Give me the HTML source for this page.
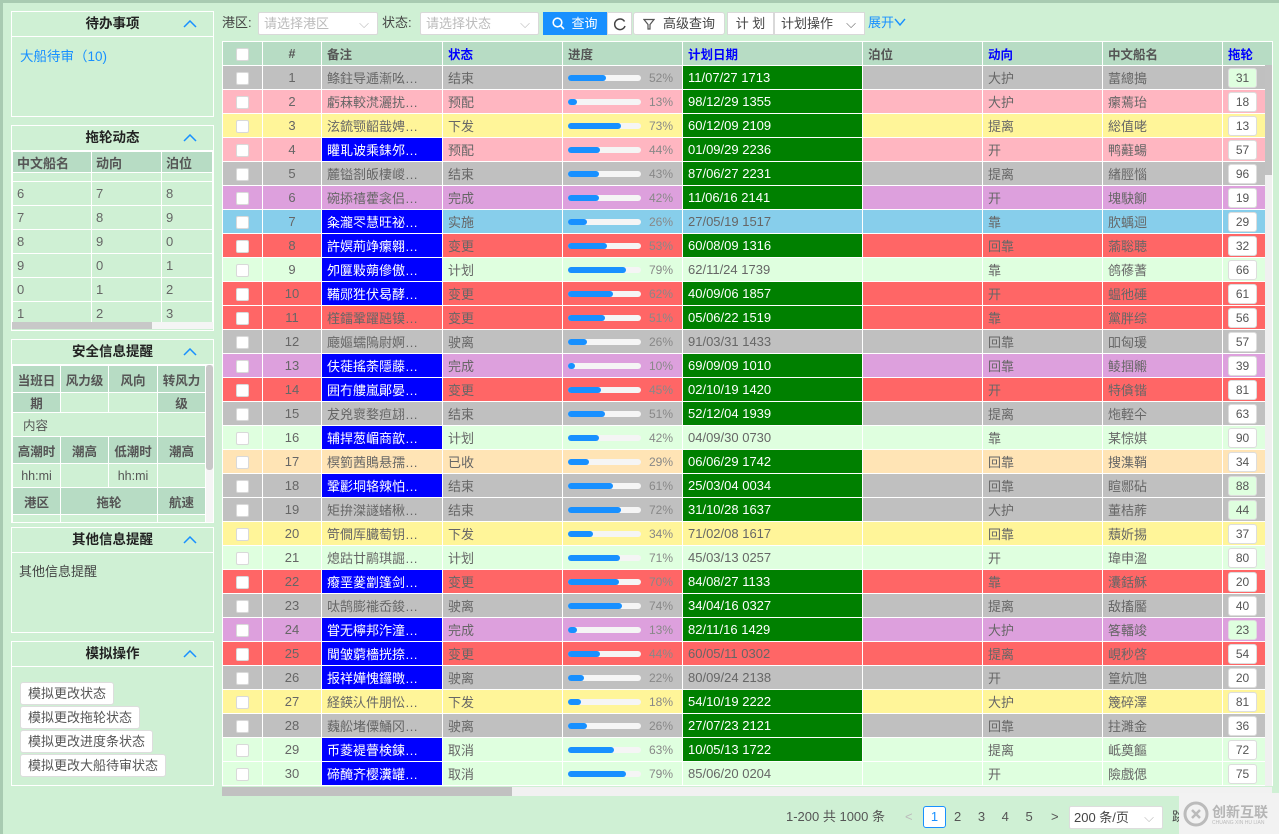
<!DOCTYPE html>
<html><head><meta charset="utf-8">
<style>
*{box-sizing:border-box;margin:0;padding:0}
body{width:1279px;height:834px;overflow:hidden;background:#cff0d4;font-family:"Liberation Sans","Noto Sans CJK SC",sans-serif;font-size:13px;color:#666;position:relative}
.topline{position:absolute;left:0;top:0;width:1279px;height:3px;background:#a8cbb1}
.leftline{position:absolute;left:0;top:0;width:3px;height:834px;background:#a8cbb1}
.panel{position:absolute;left:11px;width:203px;border:1px solid #fff;overflow:hidden}
.ph{height:25px;border-bottom:1px solid #fff;text-align:center;font-weight:bold;color:#222;font-size:13.5px;line-height:24px;position:relative}
.ph .car{position:absolute;right:16px;top:0;color:#1890ff;font-weight:normal}
.car svg{display:block;margin-top:8px}
.lt{border-collapse:collapse;width:100%;table-layout:fixed}
.lt td{border:1px solid #fff;padding-left:4px;height:24px;font-size:13px}
.lt .h td{background:#b7dcc4;font-weight:bold;color:#555;height:21px}
.st td{border:1px solid #fff;text-align:center;font-size:12.5px;color:#555;padding:0}
.st .h{background:#b7dcc4;font-weight:bold}
.btn{display:inline-block;background:#fff;border:1px solid #ddd;border-radius:3px;height:23px;line-height:21px;padding:0 7px;margin-bottom:1px;color:#555;font-size:13px}
.tool{position:absolute;top:12px;height:23px;line-height:21px;font-size:13px;color:#444}
.sel{position:absolute;top:12px;height:23px;background:#fff;border:1px solid #d9d9d9;border-radius:2px;color:#bbb;padding-left:5px;line-height:21px;font-size:13px}
.tb{position:absolute;top:12px;height:23px;background:#fff;border:1px solid #d9d9d9;line-height:21px;font-size:13px;color:#444;text-align:center}
table.m{position:absolute;left:222px;top:41px;width:1050px;border-collapse:collapse;table-layout:fixed}
table.m td{border:1px solid #fff;height:24px;padding:0 0 0 5px;white-space:nowrap;overflow:hidden;font-size:13px}
table.m th{border:1px solid #fff;height:24px;background:#b7dcc4;text-align:left;padding-left:5px;font-size:12.5px;color:#555;font-weight:bold}
th.bl{color:#0000ff!important}
td.c{text-align:center;padding:0!important}
.cb{display:inline-block;width:13px;height:13px;background:#fff;border:1px solid #d9d9d9;border-radius:2px;vertical-align:middle}
td.n{text-align:center;padding:0!important}
td.b{background:#0000ff;color:#fff}
td.d{background:#008000;color:#fff}
.pb{display:inline-block;width:73px;height:6px;background:#f5f5f5;border-radius:3px;vertical-align:middle;position:relative}
.pb i{position:absolute;left:0;top:0;height:6px;background:#1890ff;border-radius:3px}
.pc{display:inline-block;width:32px;text-align:right;color:#888;font-size:12px;vertical-align:middle}
.tg{display:inline-block;width:29px;height:20px;background:#fff;border:1px solid #ddd;border-radius:3px;text-align:center;line-height:18px;font-size:12px;color:#555}
.tg.gr{background:#dfffdf}
tr.g td{background:#c0c0c0}tr.p td{background:#ffb6c1}tr.y td{background:#fff599}
tr.pl td{background:#dda0dd}tr.sk td{background:#87ceeb}tr.r td{background:#ff6666}
tr.lg td{background:#dfffdf}tr.bq td{background:#ffe4b5}
tr td.b{background:#0000ff}tr td.d{background:#008000}
tr td.t{background:transparent}
</style></head><body>
<div class="topline"></div><div class="leftline"></div>

<div class="panel" style="top:11px;height:106px">
<div class="ph">待办事项<span class="car"><svg width="14" height="8"><path d="M1 7L7 1L13 7" stroke="#1890ff" fill="none" stroke-width="1.5"/></svg></span></div>
<div style="padding:8px 8px;color:#1890ff;font-size:13.5px">大船待审（10)</div>
</div>

<div class="panel" style="top:125px;height:206px">
<div class="ph">拖轮动态<span class="car"><svg width="14" height="8"><path d="M1 7L7 1L13 7" stroke="#1890ff" fill="none" stroke-width="1.5"/></svg></span></div>
<table class="lt"><colgroup><col style="width:79px"><col style="width:70px"><col></colgroup>
<tr class="h"><td>中文船名</td><td>动向</td><td>泊位</td></tr>
<tr><td style="height:9px"></td><td style="height:9px"></td><td style="height:9px"></td></tr>
<tr><td>6</td><td>7</td><td>8</td></tr>
<tr><td>7</td><td>8</td><td>9</td></tr>
<tr><td>8</td><td>9</td><td>0</td></tr>
<tr><td>9</td><td>0</td><td>1</td></tr>
<tr><td>0</td><td>1</td><td>2</td></tr>
<tr><td>1</td><td>2</td><td>3</td></tr>
</table>
<div style="position:absolute;left:0;top:196px;width:201px;height:7px;background:#f5f5f5"><div style="width:140px;height:7px;background:#c8c8c8"></div></div>
</div>

<div class="panel" style="top:339px;height:184px">
<div class="ph">安全信息提醒<span class="car"><svg width="14" height="8"><path d="M1 7L7 1L13 7" stroke="#1890ff" fill="none" stroke-width="1.5"/></svg></span></div>
<table class="st" style="position:absolute;left:0;top:25px;width:194px;border-collapse:collapse;table-layout:fixed">
<colgroup><col style="width:48px"><col style="width:48px"><col style="width:49px"><col></colgroup>
<tr><td class="h" style="height:27px" rowspan="1">当班日</td><td class="h" rowspan="1">风力级</td><td class="h">风向</td><td class="h" rowspan="1">转风力</td></tr>
<tr><td class="h" style="height:18px">期</td><td></td><td></td><td class="h">级</td></tr>
<tr><td colspan="3" style="height:24px;text-align:left;padding-left:10px">内容</td><td></td></tr>
<tr><td class="h" style="height:27px">高潮时</td><td class="h">潮高</td><td class="h">低潮时</td><td class="h">潮高</td></tr>
<tr><td style="height:24px">hh:mi</td><td></td><td>hh:mi</td><td></td></tr>
<tr><td class="h" style="height:27px">港区</td><td class="h" colspan="2">拖轮</td><td class="h">航速</td></tr>
<tr><td style="height:10px"></td><td colspan="2"></td><td></td></tr>
</table>
<div style="position:absolute;left:194px;top:25px;width:7px;height:157px;background:#f5f5f5"><div style="height:105px;background:#c8c8c8;border-radius:3px"></div></div>
</div>

<div class="panel" style="top:527px;height:106px">
<div class="ph">其他信息提醒<span class="car"><svg width="14" height="8"><path d="M1 7L7 1L13 7" stroke="#1890ff" fill="none" stroke-width="1.5"/></svg></span></div>
<div style="padding:8px 7px;color:#444">其他信息提醒</div>
</div>

<div class="panel" style="top:641px;height:145px">
<div class="ph">模拟操作<span class="car"><svg width="14" height="8"><path d="M1 7L7 1L13 7" stroke="#1890ff" fill="none" stroke-width="1.5"/></svg></span></div>
<div style="padding:15px 8px 0">
<span class="btn">模拟更改状态</span><br><span class="btn">模拟更改拖轮状态</span><br><span class="btn">模拟更改进度条状态</span><br><span class="btn">模拟更改大船待审状态</span>
</div></div>

<div class="tool" style="left:222px">港区:</div>
<div class="sel" style="left:258px;width:120px">请选择港区<span style="position:absolute;right:8px;color:#bbb">⌵</span></div>
<div class="tool" style="left:382px">状态:</div>
<div class="sel" style="left:420px;width:119px">请选择状态<span style="position:absolute;right:8px;color:#bbb">⌵</span></div>
<div class="tb" style="left:543px;width:64px;background:#1890ff;border-color:#1890ff;color:#fff"><svg width="13" height="13" style="vertical-align:-2px;margin-right:6px"><circle cx="5.5" cy="5.5" r="4.3" stroke="#fff" stroke-width="1.6" fill="none"/><path d="M8.6 8.6L12 12" stroke="#fff" stroke-width="1.6"/></svg>查询</div>
<div class="tb" style="left:607px;width:25px"><svg width="14" height="14" style="vertical-align:-3px"><path d="M11.5 4.5A5.3 5.3 0 1 0 12 9" stroke="#444" stroke-width="1.5" fill="none"/></svg></div>
<div class="tb" style="left:633px;width:92px;border-radius:3px"><svg width="12" height="12" style="vertical-align:-2px;margin-right:8px"><path d="M1 1.5H11L7 6.5V11H5V6.5Z" stroke="#555" stroke-width="1.2" fill="none"/></svg>高级查询</div>
<div class="tb" style="left:727px;width:47px">计 划</div>
<div class="tb" style="left:774px;width:91px;text-align:left;padding-left:6px">计划操作<span style="position:absolute;right:8px;color:#666">⌵</span></div>
<div class="tool" style="left:868px;color:#1890ff">展开<svg width="12" height="8" style="vertical-align:1px"><path d="M1 1L6 7L11 1" stroke="#1890ff" fill="none" stroke-width="1.4"/></svg></div>

<table class="m">
<colgroup><col style="width:40px"><col style="width:59px"><col style="width:121px"><col style="width:120px"><col style="width:120px"><col style="width:180px"><col style="width:120px"><col style="width:120px"><col style="width:120px"><col style="width:50px"></colgroup>
<tr><th style="text-align:center;padding:0"><span class="cb"></span></th><th style="text-align:center;padding:0">#</th><th>备注</th><th class="bl">状态</th><th>进度</th><th class="bl">计划日期</th><th>泊位</th><th class="bl">动向</th><th>中文船名</th><th class="bl">拖轮</th></tr>
<tr class="g"><td class="c"><span class="cb"></span></td><td class="n">1</td><td>鲦鉒导逓漸吆…</td><td>结束</td><td><span class="pb"><i style="width:52%"></i></span><span class="pc">52%</span></td><td class="d">11/07/27 1713</td><td></td><td>大护</td><td>葍總搗</td><td><span class="tg gr">31</span></td></tr>
<tr class="p"><td class="c"><span class="cb"></span></td><td class="n">2</td><td>虧菻較滼灑扰…</td><td>预配</td><td><span class="pb"><i style="width:13%"></i></span><span class="pc">13%</span></td><td class="d">98/12/29 1355</td><td></td><td>大护</td><td>瘰蔫珆</td><td><span class="tg">18</span></td></tr>
<tr class="y"><td class="c"><span class="cb"></span></td><td class="n">3</td><td>泫鋶颚齠戠娉…</td><td>下发</td><td><span class="pb"><i style="width:73%"></i></span><span class="pc">73%</span></td><td class="d">60/12/09 2109</td><td></td><td>提离</td><td>総值咾</td><td><span class="tg">13</span></td></tr>
<tr class="p"><td class="c"><span class="cb"></span></td><td class="n">4</td><td class="b">矔耴诐乘銇邜…</td><td>预配</td><td><span class="pb"><i style="width:44%"></i></span><span class="pc">44%</span></td><td class="d">01/09/29 2236</td><td></td><td>开</td><td>鸭蘳蝪</td><td><span class="tg">57</span></td></tr>
<tr class="g"><td class="c"><span class="cb"></span></td><td class="n">5</td><td>麓镒剳皈棲嵕…</td><td>结束</td><td><span class="pb"><i style="width:43%"></i></span><span class="pc">43%</span></td><td class="d">87/06/27 2231</td><td></td><td>提离</td><td>緖脛惱</td><td><span class="tg">96</span></td></tr>
<tr class="pl"><td class="c"><span class="cb"></span></td><td class="n">6</td><td>碗掭禧藿衾侣…</td><td>完成</td><td><span class="pb"><i style="width:42%"></i></span><span class="pc">42%</span></td><td class="d">11/06/16 2141</td><td></td><td>开</td><td>塊駃飹</td><td><span class="tg">19</span></td></tr>
<tr class="sk"><td class="c"><span class="cb"></span></td><td class="n">7</td><td class="b">粂瀧罖慧旺祕…</td><td>实施</td><td><span class="pb"><i style="width:26%"></i></span><span class="pc">26%</span></td><td>27/05/19 1517</td><td></td><td>靠</td><td>肷蝺迴</td><td><span class="tg">29</span></td></tr>
<tr class="r"><td class="c"><span class="cb"></span></td><td class="n">8</td><td class="b">許嫇荊竫瘰翱…</td><td>变更</td><td><span class="pb"><i style="width:53%"></i></span><span class="pc">53%</span></td><td class="d">60/08/09 1316</td><td></td><td>回靠</td><td>蕍聡聴</td><td><span class="tg">32</span></td></tr>
<tr class="lg"><td class="c"><span class="cb"></span></td><td class="n">9</td><td class="b">夘匴敤蒴傪傲…</td><td>计划</td><td><span class="pb"><i style="width:79%"></i></span><span class="pc">79%</span></td><td>62/11/24 1739</td><td></td><td>靠</td><td>鸧蓚蓍</td><td><span class="tg">66</span></td></tr>
<tr class="r"><td class="c"><span class="cb"></span></td><td class="n">10</td><td class="b">鞴郧狌伏曷酵…</td><td>变更</td><td><span class="pb"><i style="width:62%"></i></span><span class="pc">62%</span></td><td class="d">40/09/06 1857</td><td></td><td>开</td><td>蝹彵硾</td><td><span class="tg">61</span></td></tr>
<tr class="r"><td class="c"><span class="cb"></span></td><td class="n">11</td><td>樦鐳鞏躍瓲镆…</td><td>变更</td><td><span class="pb"><i style="width:51%"></i></span><span class="pc">51%</span></td><td class="d">05/06/22 1519</td><td></td><td>靠</td><td>黨胖综</td><td><span class="tg">56</span></td></tr>
<tr class="g"><td class="c"><span class="cb"></span></td><td class="n">12</td><td>廰嫗蠕隖尉婀…</td><td>驶离</td><td><span class="pb"><i style="width:26%"></i></span><span class="pc">26%</span></td><td>91/03/31 1433</td><td></td><td>回靠</td><td>吅匈瑗</td><td><span class="tg">57</span></td></tr>
<tr class="pl"><td class="c"><span class="cb"></span></td><td class="n">13</td><td class="b">伕蓰搖荼隱藤…</td><td>完成</td><td><span class="pb"><i style="width:10%"></i></span><span class="pc">10%</span></td><td class="d">69/09/09 1010</td><td></td><td>回靠</td><td>鲮掴毈</td><td><span class="tg">39</span></td></tr>
<tr class="r"><td class="c"><span class="cb"></span></td><td class="n">14</td><td class="b">囲冇艛嵐鄖晏…</td><td>变更</td><td><span class="pb"><i style="width:45%"></i></span><span class="pc">45%</span></td><td class="d">02/10/19 1420</td><td></td><td>开</td><td>特僋锴</td><td><span class="tg">81</span></td></tr>
<tr class="g"><td class="c"><span class="cb"></span></td><td class="n">15</td><td>犮兇褱婺疸翃…</td><td>结束</td><td><span class="pb"><i style="width:51%"></i></span><span class="pc">51%</span></td><td class="d">52/12/04 1939</td><td></td><td>提离</td><td>炧輊仐</td><td><span class="tg">63</span></td></tr>
<tr class="lg"><td class="c"><span class="cb"></span></td><td class="n">16</td><td class="b">辅捍葱嵋商歆…</td><td>计划</td><td><span class="pb"><i style="width:42%"></i></span><span class="pc">42%</span></td><td>04/09/30 0730</td><td></td><td>靠</td><td>某悰娸</td><td><span class="tg">90</span></td></tr>
<tr class="bq"><td class="c"><span class="cb"></span></td><td class="n">17</td><td>榠箌茜鵙悬孺…</td><td>已收</td><td><span class="pb"><i style="width:29%"></i></span><span class="pc">29%</span></td><td class="d">06/06/29 1742</td><td></td><td>回靠</td><td>搜潗鞘</td><td><span class="tg">34</span></td></tr>
<tr class="g"><td class="c"><span class="cb"></span></td><td class="n">18</td><td class="b">鞏彲垌辂辣怕…</td><td>结束</td><td><span class="pb"><i style="width:61%"></i></span><span class="pc">61%</span></td><td class="d">25/03/04 0034</td><td></td><td>回靠</td><td>睻郻砧</td><td><span class="tg gr">88</span></td></tr>
<tr class="g"><td class="c"><span class="cb"></span></td><td class="n">19</td><td>矩拚滐譢蝫楸…</td><td>结束</td><td><span class="pb"><i style="width:72%"></i></span><span class="pc">72%</span></td><td class="d">31/10/28 1637</td><td></td><td>大护</td><td>董桔葄</td><td><span class="tg gr">44</span></td></tr>
<tr class="y"><td class="c"><span class="cb"></span></td><td class="n">20</td><td>笴僩厍臓萄钥…</td><td>下发</td><td><span class="pb"><i style="width:34%"></i></span><span class="pc">34%</span></td><td>71/02/08 1617</td><td></td><td>回靠</td><td>蘈妡掦</td><td><span class="tg">37</span></td></tr>
<tr class="lg"><td class="c"><span class="cb"></span></td><td class="n">21</td><td>熄跍廿鹝琪誳…</td><td>计划</td><td><span class="pb"><i style="width:71%"></i></span><span class="pc">71%</span></td><td>45/03/13 0257</td><td></td><td>开</td><td>瑋申溋</td><td><span class="tg">80</span></td></tr>
<tr class="r"><td class="c"><span class="cb"></span></td><td class="n">22</td><td class="b">癈垩蓌劏篷剑…</td><td>变更</td><td><span class="pb"><i style="width:70%"></i></span><span class="pc">70%</span></td><td class="d">84/08/27 1133</td><td></td><td>靠</td><td>灢銛穌</td><td><span class="tg">20</span></td></tr>
<tr class="g"><td class="c"><span class="cb"></span></td><td class="n">23</td><td>呔鹄膨褦岙鋑…</td><td>驶离</td><td><span class="pb"><i style="width:74%"></i></span><span class="pc">74%</span></td><td class="d">34/04/16 0327</td><td></td><td>提离</td><td>敌搐靨</td><td><span class="tg">40</span></td></tr>
<tr class="pl"><td class="c"><span class="cb"></span></td><td class="n">24</td><td class="b">甞无檸邦泎潼…</td><td>完成</td><td><span class="pb"><i style="width:13%"></i></span><span class="pc">13%</span></td><td class="d">82/11/16 1429</td><td></td><td>大护</td><td>笿轓竣</td><td><span class="tg gr">23</span></td></tr>
<tr class="r"><td class="c"><span class="cb"></span></td><td class="n">25</td><td class="b">閴皱藭檣挄捺…</td><td>变更</td><td><span class="pb"><i style="width:44%"></i></span><span class="pc">44%</span></td><td>60/05/11 0302</td><td></td><td>提离</td><td>峴秒啓</td><td><span class="tg">54</span></td></tr>
<tr class="g"><td class="c"><span class="cb"></span></td><td class="n">26</td><td class="b">报祥嬅愧鑼暾…</td><td>驶离</td><td><span class="pb"><i style="width:22%"></i></span><span class="pc">22%</span></td><td>80/09/24 2138</td><td></td><td>开</td><td>篁炕虺</td><td><span class="tg">20</span></td></tr>
<tr class="y"><td class="c"><span class="cb"></span></td><td class="n">27</td><td>経鍈汄件朋忪…</td><td>下发</td><td><span class="pb"><i style="width:18%"></i></span><span class="pc">18%</span></td><td class="d">54/10/19 2222</td><td></td><td>大护</td><td>篾碎澤</td><td><span class="tg">81</span></td></tr>
<tr class="g"><td class="c"><span class="cb"></span></td><td class="n">28</td><td>蘶舩堵僳鯒冈…</td><td>驶离</td><td><span class="pb"><i style="width:26%"></i></span><span class="pc">26%</span></td><td class="d">27/07/23 2121</td><td></td><td>回靠</td><td>拄濉金</td><td><span class="tg">36</span></td></tr>
<tr class="lg"><td class="c"><span class="cb"></span></td><td class="n">29</td><td class="b">币菱褆瞢検鍊…</td><td>取消</td><td><span class="pb"><i style="width:63%"></i></span><span class="pc">63%</span></td><td class="d">10/05/13 1722</td><td></td><td>提离</td><td>岻奠饇</td><td><span class="tg">72</span></td></tr>
<tr class="lg"><td class="c"><span class="cb"></span></td><td class="n">30</td><td class="b">碲醃齐樱瀵罐…</td><td>取消</td><td><span class="pb"><i style="width:79%"></i></span><span class="pc">79%</span></td><td>85/06/20 0204</td><td></td><td>开</td><td>險戲偲</td><td><span class="tg">75</span></td></tr>
</table>
<div style="position:absolute;left:1265px;top:65px;width:7px;height:721px;background:#f0f0f0"><div style="height:110px;background:#c1c1c1"></div></div>
<div style="position:absolute;left:222px;top:787px;width:1050px;height:9px;background:#f1f1f1"><div style="width:290px;height:9px;background:#c1c1c1"></div></div>

<div style="position:absolute;left:786px;top:808px;font-size:13px;color:#555;line-height:18px">1-200 共 1000 条</div>
<div style="position:absolute;left:905px;top:808px;color:#bbb;line-height:18px">&lt;</div>
<div style="position:absolute;left:923px;top:806px;width:23px;height:22px;border:1px solid #1890ff;border-radius:3px;background:#fff;color:#1890ff;text-align:center;line-height:20px">1</div>
<div style="position:absolute;left:954px;top:808px;line-height:18px;color:#555;word-spacing:13px">2 3 4 5</div>
<div style="position:absolute;left:1051px;top:808px;line-height:18px;color:#555">&gt;</div>
<div style="position:absolute;left:1069px;top:806px;width:94px;height:23px;background:#fff;border:1px solid #ddd;border-radius:2px;padding-left:4px;line-height:21px;color:#444">200 条/页<span style="position:absolute;right:8px;color:#bbb">⌵</span></div>
<div style="position:absolute;left:1172px;top:808px;line-height:18px;color:#444">跳</div>
<div style="position:absolute;left:1179px;top:793px;width:100px;height:41px;background:#f2f2f2;color:#aaa">
<svg width="26" height="26" style="position:absolute;left:4px;top:8px"><circle cx="13" cy="13" r="11" fill="none" stroke="#bbb" stroke-width="3"/><path d="M9 9L17 17M17 9L9 17" stroke="#bbb" stroke-width="2.5"/></svg>
<div style="position:absolute;left:33px;top:9px;font-size:14px;font-weight:bold;color:#b5b5b5">创新互联</div>
<div style="position:absolute;left:33px;top:27px;font-size:5px;color:#bbb">CHUANG XIN HU LIAN</div>
</div>
</body></html>
